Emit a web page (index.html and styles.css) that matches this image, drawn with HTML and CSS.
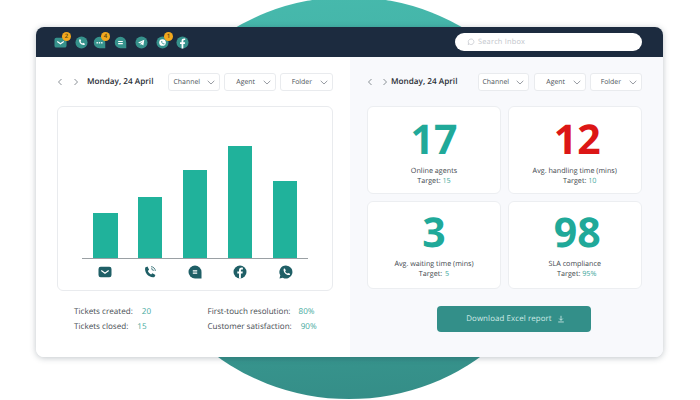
FILE: index.html
```html
<!DOCTYPE html>
<html lang="en">
<head>
<meta charset="utf-8">
<title>Dashboard</title>
<link rel="stylesheet" href="styles.css">
</head>
<body>
<div class="stage">
  <div class="blob"></div>
  <main class="window">
    <header class="topbar">
      <div class="channels">
        <span class="chan c1"><svg viewBox="0 0 14 14"><rect x="0.5" y="2" width="13" height="10.5" rx="2" fill="#36928c"/><path d="M3.5 6l3.5 2.4L10.500 6" fill="none" stroke="#fff" stroke-width="1.2"/></svg><b class="badge">2</b></span>
        <span class="chan c2"><svg viewBox="0 0 14 14"><circle cx="7" cy="7" r="6.500" fill="#36928c"/><path d="M4.500 3.800l1.300-.3.9 1.900-.8.800c.4.900 1.100 1.600 2 2l.8-.8 1.900.9-.3 1.300c-3.400.6-6.400-2.400-5.800-5.800z" fill="#fff"/></svg></span>
        <span class="chan c3"><svg viewBox="0 0 14 14"><path d="M7 .8a6.200 6.200 0 0 1 6.200 6.200v6.200H7A6.200 6.200 0 0 1 7 .8z" fill="#36928c"/><circle cx="4.500" cy="7.300" r=".9" fill="#fff"/><circle cx="7" cy="7.300" r=".9" fill="#fff"/><circle cx="9.500" cy="7.300" r=".9" fill="#fff"/></svg><b class="badge">4</b></span>
        <span class="chan c4"><svg viewBox="0 0 14 14"><path d="M7 .8a6.200 6.200 0 0 1 6.200 6.200v6.200H7A6.200 6.200 0 0 1 7 .8z" fill="#36928c"/><path d="M4.500 5.800h5M4.500 8.200h5" stroke="#fff" stroke-width="1.100"/></svg></span>
        <span class="chan c5"><svg viewBox="0 0 14 14"><circle cx="7" cy="7" r="6.500" fill="#36928c"/><path d="M3.300 7l6.700-3-1 6.200-2-1.400-1 1V8.200l3-2.600-3.800 2.200z" fill="#fff"/></svg></span>
        <span class="chan c6"><svg viewBox="0 0 14 14"><circle cx="7" cy="7" r="6.500" fill="#36928c"/><circle cx="7" cy="7" r="3.600" fill="#fff"/><path d="M5.700 5.500l.8-.1.500 1.100-.4.500c.3.500.6.800 1.100 1.100l.5-.4 1 .5-.1.800c-2 .3-3.700-1.500-3.400-3.500z" fill="#36928c"/></svg><b class="badge">1</b></span>
        <span class="chan c7"><svg viewBox="0 0 14 14"><circle cx="7" cy="7" r="6.500" fill="#36928c"/><path d="M7.900 13.400V8.500h1.600l.3-1.900H7.900V5.400c0-.6.300-1 1-1h1V2.700c-2.400-.4-3.900.5-3.900 2.500v1.400H4.300v1.900H6v4.900z" fill="#fff"/></svg></span>
      </div>
      <div class="search">
        <svg class="search-icon" viewBox="0 0 10 10"><path d="M5.200 1.200a3.500 3.500 0 1 1-2.300 6.200L1.500 8.300l.4-2A3.600 3.600 0 0 1 5.200 1.200z" fill="none" stroke="#b9bdc4" stroke-width=".8"/></svg>
        <span>Search Inbox</span>
      </div>
    </header>
    <div class="panels">
      <section class="panel left">
        <div class="toolbar">
          <div class="pager">
            <svg class="arrow" viewBox="0 0 6 8"><path d="M4.500 1L1.500 4l3 3" fill="none" stroke="#7d838b" stroke-width=".9"/></svg>
            <svg class="arrow" viewBox="0 0 6 8"><path d="M1.500 1l3 3-3 3" fill="none" stroke="#7d838b" stroke-width=".9"/></svg>
          </div>
          <div class="date">Monday, 24 April</div>
          <div class="filters">
            <div class="filter f-channel"><span>Channel</span><svg viewBox="0 0 8 5"><path d="M.7.8L4 4 7.300.8" fill="none" stroke="#7d838b" stroke-width=".8"/></svg></div>
            <div class="filter f-agent"><span>Agent</span><svg viewBox="0 0 8 5"><path d="M.7.8L4 4 7.300.8" fill="none" stroke="#7d838b" stroke-width=".8"/></svg></div>
            <div class="filter f-folder"><span>Folder</span><svg viewBox="0 0 8 5"><path d="M.7.8L4 4 7.300.8" fill="none" stroke="#7d838b" stroke-width=".8"/></svg></div>
          </div>
        </div>
        <div class="chart">
          <div class="bars">
            <div class="bar" style="height:45px"></div>
            <div class="bar" style="height:61px"></div>
            <div class="bar" style="height:88px"></div>
            <div class="bar" style="height:112px"></div>
            <div class="bar" style="height:77px"></div>
          </div>
          <div class="axis-icons">
            <svg viewBox="0 0 14 14"><rect x="0.500" y="1.800" width="13" height="10.400" rx="2.200" fill="#1f5f66"/><path d="M3.300 5.500L7 8.200l3.700-2.700" fill="none" stroke="#fff" stroke-width="1.200"/></svg>
            <svg viewBox="0 0 14 14"><path d="M2.200 2.600l2.300-1 1.600 3.200-1.300 1.300c.7 1.500 1.800 2.700 3.300 3.400l1.300-1.300 3 1.700-.9 2.200c-5.400 1.200-10.400-4.100-9.300-9.500z" fill="#1f5f66"/><path d="M8 1.700a4.300 4.300 0 0 1 4.300 4.300M8 3.700A2.300 2.300 0 0 1 10.300 6" fill="none" stroke="#1f5f66" stroke-width=".8"/></svg>
            <svg viewBox="0 0 14 14"><path d="M7 .5A6.500 6.500 0 0 1 13.500 7v6.500H7A6.500 6.500 0 0 1 7 .5z" fill="#1f5f66"/><path d="M4.800 5.900h4.400M4.800 8.100h4.400" stroke="#fff" stroke-width="1.100"/></svg>
            <svg viewBox="0 0 14 14"><circle cx="7" cy="7" r="6.500" fill="#1f5f66"/><path d="M7.900 13.400V8.500h1.600l.3-1.900H7.900V5.400c0-.6.300-1 1-1h1V2.700c-2.400-.4-3.900.5-3.900 2.500v1.400H4.300v1.900H6v4.900z" fill="#fff"/></svg>
            <svg viewBox="0 0 14 14"><path d="M7 .5a6.500 6.500 0 1 1-3.200 12.200L.5 13.500l.8-3.200A6.500 6.500 0 0 1 7 .5z" fill="#1f5f66"/><path d="M4.700 3.800l1.200-.2.900 2-.7.800c.5 1 1.200 1.700 2.200 2.200l.8-.7 2 .9-.2 1.200c-3.500.8-7-2.700-6.200-6.200z" fill="#fff"/></svg>
          </div>
        </div>
        <div class="stats">
          <div class="stat-col">
            <p>Tickets created:<em class="v20">20</em></p>
            <p>Tickets closed:<em class="v15">15</em></p>
          </div>
          <div class="stat-col second">
            <p>First-touch resolution:<em class="v80">80%</em></p>
            <p>Customer satisfaction:<em class="v90">90%</em></p>
          </div>
        </div>
      </section>
      <section class="panel right">
        <div class="toolbar">
          <div class="pager">
            <svg class="arrow" viewBox="0 0 6 8"><path d="M4.500 1L1.500 4l3 3" fill="none" stroke="#7d838b" stroke-width=".9"/></svg>
            <svg class="arrow" viewBox="0 0 6 8"><path d="M1.500 1l3 3-3 3" fill="none" stroke="#7d838b" stroke-width=".9"/></svg>
          </div>
          <div class="date">Monday, 24 April</div>
          <div class="filters">
            <div class="filter f-channel"><span>Channel</span><svg viewBox="0 0 8 5"><path d="M.7.8L4 4 7.300.8" fill="none" stroke="#7d838b" stroke-width=".8"/></svg></div>
            <div class="filter f-agent"><span>Agent</span><svg viewBox="0 0 8 5"><path d="M.7.8L4 4 7.300.8" fill="none" stroke="#7d838b" stroke-width=".8"/></svg></div>
            <div class="filter f-folder"><span>Folder</span><svg viewBox="0 0 8 5"><path d="M.7.8L4 4 7.300.8" fill="none" stroke="#7d838b" stroke-width=".8"/></svg></div>
          </div>
        </div>
        <div class="kpis">
          <div class="kpi"><div class="num">17</div><div class="lbl">Online agents</div><div class="lbl">Target: <em>15</em></div></div>
          <div class="kpi"><div class="num bad nudge">12</div><div class="lbl">Avg. handling time (mins)</div><div class="lbl t10">Target: <em>10</em></div></div>
          <div class="kpi low"><div class="num">3</div><div class="lbl">Avg. waiting time (mins)</div><div class="lbl">Target: <em class="t5">5</em></div></div>
          <div class="kpi low"><div class="num nudge">98</div><div class="lbl">SLA compliance</div><div class="lbl t95">Target: <em>95%</em></div></div>
        </div>
        <div class="btn-row">
          <div class="btn">Download Excel report<svg viewBox="0 0 10 10"><path d="M5 1v5.500M2.800 4.500L5 6.700l2.200-2.200M1.500 8.700h7" fill="none" stroke="#d8efec" stroke-width="1"/></svg></div>
        </div>
      </section>
    </div>
  </main>
</div>
</body>
</html>
```

FILE: styles.css
```css
* { box-sizing: border-box; }
html, body { margin: 0; padding: 0; background: #fff; }
body { font-family: "Open Sans", sans-serif; color: #3c4248; text-rendering: geometricPrecision; }
.stage { position: relative; width: 700px; height: 400px; overflow: hidden; padding: 27px 37px 0 36px; }
.blob {
  position: absolute; left: 135px; top: -3px; width: 428px; height: 402px; border-radius: 50%;
  background: linear-gradient(176deg, #47baad 0%, #3ea89e 50%, #348c86 100%);
}
.window {
  position: relative; width: 627px; height: 330px; border-radius: 8px; overflow: hidden; background: #fff;
  display: flex; flex-direction: column; box-shadow: 0 1px 6px rgba(30, 45, 60, .28);
}
.topbar { height: 30px; background: #1c2b3f; display: flex; align-items: center; justify-content: space-between; padding: 0 21px 0 19px; flex: none; }
.channels { display: flex; align-items: center; }
.chan { position: relative; display: block; width: 13px; height: 13px; margin-right: 6px; }
.chan svg { display: block; width: 13px; height: 13px; }
.c1 { margin-left: -1px; margin-right: 8px; }
.c2 { margin-right: 5px; }
.c3 { margin-right: 8px; }
.c4 { margin-right: 8px; }
.c5 { margin-right: 8px; }
.c6 { margin-right: 7px; }
.badge {
  position: absolute; right: -4px; top: -4px; width: 9px; height: 9px; border-radius: 50%; background: #f2a81d;
  color: #5a4510; font-size: 6px; line-height: 9px; text-align: center; font-weight: 600;
}
.search { width: 187px; height: 18px; border-radius: 9px; background: #fff; display: flex; align-items: center; padding-left: 12px; color: #c2c6cc; font-size: 7.4px; letter-spacing: .2px; }
.search-icon { width: 8px; height: 8px; margin-right: 3px; }
.panels { flex: 1; display: flex; }
.panel { height: 100%; }
.left { width: 314px; background: #fff; padding: 16px 17px 0 21px; }
.right { width: 313px; background: #f8f9fc; padding: 16px 21px 0 17px; }
.toolbar { display: flex; align-items: center; height: 18px; }
.pager { display: flex; gap: 10px; width: 30px; flex: none; }
.right .pager { width: 24px; gap: 9px; }
.arrow { width: 6px; height: 8px; display: block; }
.date { font-size: 8.2px; font-weight: 600; color: #2b3037; width: 81px; flex: none; position: relative; top: -1px; white-space: nowrap; }
.right .date { width: 87px; }
.filters { display: flex; gap: 4px; }
.filter {
  height: 18px; background: #fff; border: 1px solid #e9ebee; border-radius: 3px; display: flex; align-items: center; justify-content: flex-end;
  font-size: 6.9px; color: #4b5157; padding-right: 4px;
}
.filter svg { width: 8px; height: 5px; margin-left: 7px; }
.f-channel { width: 52px; }
.f-agent { width: 52px; }
.f-folder { width: 53px; }
.f-agent svg, .f-folder svg { margin-left: 8px; }
.right .f-channel { width: 51px; }
.right .f-agent { width: 52px; margin-left: 1px; }
.right .f-folder { width: 52px; }
.chart { margin-top: 15px; width: 276px; height: 185px; border: 1px solid #e9ebee; border-radius: 6px; background: #fff; padding: 0 24px; }
.bars { height: 152px; border-bottom: 1px solid #9aa0a4; display: flex; align-items: flex-end; justify-content: space-between; padding: 0 11px; }
.bar { width: 24.500px; background: #20b29b; }
.axis-icons { display: flex; justify-content: space-between; padding: 0 15.500px 0 16px; margin-top: 6px; }
.axis-icons svg { width: 14px; height: 14px; display: block; }
.stats { display: flex; margin-top: 13px; padding-left: 17px; font-size: 8.1px; color: #454b51; }
.stat-col { width: 134px; }
.stat-col.second { width: 126px; }
.stat-col p { margin: 0; height: 15px; line-height: 15px; white-space: nowrap; }
.stat-col em { font-style: normal; color: #3fa99d; }
.v20 { margin-left: 9px; }
.v15 { margin-left: 9px; }
.v80 { margin-left: 8px; }
.v90 { margin-left: 9px; }
.kpis { margin-top: 15px; display: grid; grid-template-columns: 134px 134.500px; grid-template-rows: 88px 88px; gap: 7px 6.500px; }
.kpi { background: #fff; border: 1px solid #eceef1; border-radius: 6px; text-align: center; padding-top: 14px; }
.kpi.low { padding-top: 12px; }
.num { font-size: 41px; font-weight: 700; line-height: 36px; height: 36px; color: #20a999; margin-bottom: 9px; }
.num.bad { color: #dc1616; }
.num.nudge { padding-left: 5px; }
.lbl { font-size: 7.2px; line-height: 10px; color: #41474d; }
.lbl em { font-style: normal; color: #3fa99d; }
.lbl.t10 { padding-left: 10px; }
.lbl.t95 { padding-left: 4px; }
.lbl .t5 { margin-left: 1px; }
.btn-row { display: flex; margin-top: 17px; padding-left: 70px; }
.btn {
  width: 154px; height: 26px; border-radius: 4px; background: #338f89; color: #cfeae6; font-size: 7.9px; letter-spacing: .1px; padding-left: 3px;
  display: flex; align-items: center; justify-content: center;
}
.btn svg { width: 8px; height: 8px; margin-left: 5px; }
```
